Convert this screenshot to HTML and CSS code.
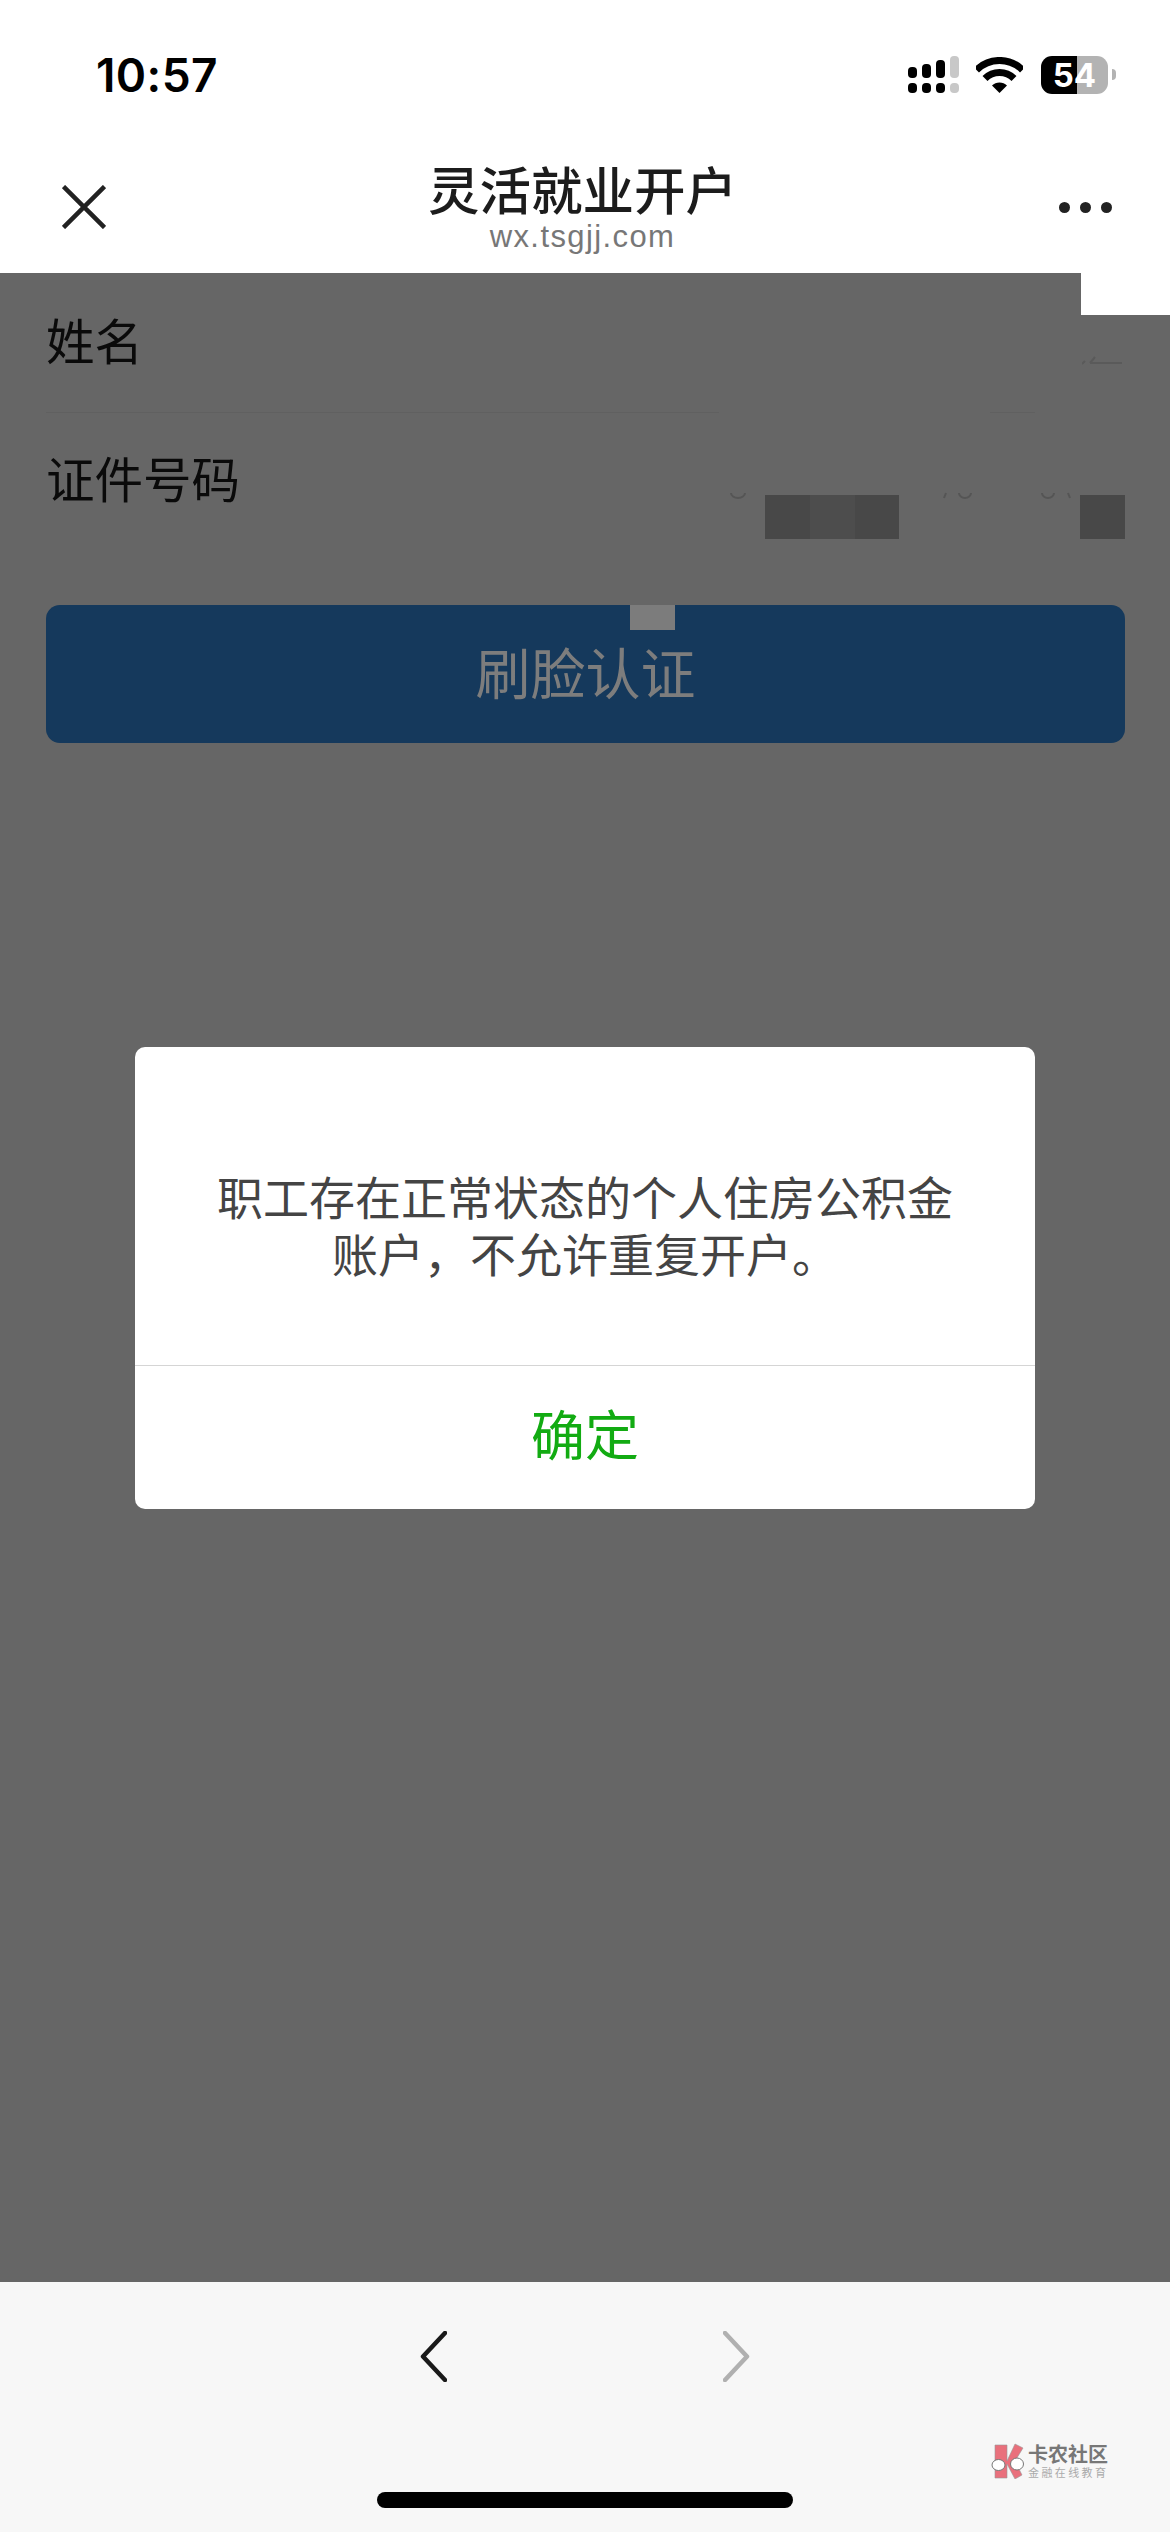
FILE: index.html
```html
<!DOCTYPE html>
<html lang="zh-CN">
<head>
<meta charset="utf-8">
<title>灵活就业开户</title>
<link rel="stylesheet" href="styles.css">
</head>
<body>
<div class="page">
  <header class="status">
    <span class="time">10:57</span>
    <div class="status-icons">
      <svg class="signal" width="51" height="37" viewBox="0 0 51 37">
        <g fill="#000">
          <rect x="0" y="11" width="9" height="11" rx="4"/><rect x="0" y="27" width="9" height="10" rx="4"/>
          <rect x="14" y="8" width="9" height="14" rx="4"/><rect x="14" y="27" width="9" height="10" rx="4"/>
          <rect x="28" y="4" width="9" height="18" rx="4"/><rect x="28" y="27" width="9" height="10" rx="4"/>
        </g>
        <g fill="#c8c8c8">
          <rect x="42" y="0" width="9" height="22" rx="4"/><rect x="42" y="27" width="9" height="10" rx="4"/>
        </g>
      </svg>
      <svg class="wifi" width="47" height="36" viewBox="0 0 47 36">
        <path d="M0.5 13 A32.5 32.5 0 0 1 46.5 13" fill="none" stroke="#000" stroke-width="7"/>
        <path d="M9 21.5 A20.5 20.5 0 0 1 38 21.5" fill="none" stroke="#000" stroke-width="7"/>
        <path d="M23.5 36 L16 28.5 A10.6 10.6 0 0 1 31 28.5 Z" fill="#000"/>
      </svg>
      <div class="battery-wrap">
        <div class="battery">54</div>
        <span class="battery-nub"></span>
      </div>
    </div>
  </header>

  <nav class="nav">
    <svg class="close" width="44" height="44" viewBox="0 0 44 44">
      <path d="M1.5 1.5 L42.5 42.5 M42.5 1.5 L1.5 42.5" stroke="#222" stroke-width="4.5" fill="none"/>
    </svg>
    <div class="nav-title">
      <div class="title">灵活就业开户</div>
      <div class="domain">wx.tsgjj.com</div>
    </div>
    <svg class="more" width="53" height="11" viewBox="0 0 53 11">
      <circle cx="5.5" cy="5.5" r="5.5" fill="#222"/>
      <circle cx="26.5" cy="5.5" r="5.5" fill="#222"/>
      <circle cx="47.5" cy="5.5" r="5.5" fill="#222"/>
    </svg>
  </nav>

  <main class="content">
    <section class="form">
      <div class="row row-name">
        <span class="label">姓名</span>
        <svg class="name-value" width="40" height="10" viewBox="0 0 40 10">
          <path d="M0 8 L3 5 M8 7 L40 7 M8 7 L13 1" stroke="#5a5a5a" stroke-width="2" fill="none"/>
        </svg>
      </div>
      <div class="divider">
        <span class="divider-a"></span>
        <span class="divider-b"></span>
      </div>
      <div class="row row-id">
        <span class="label">证件号码</span>
        <svg class="id-value" width="406" height="48" viewBox="0 0 406 48">
          <rect x="46" y="4" width="45" height="44" fill="#484848"/>
          <rect x="91" y="4" width="45" height="44" fill="#4d4d4d"/>
          <rect x="136" y="4" width="44" height="44" fill="#484848"/>
          <rect x="361" y="4" width="45" height="44" fill="#484848"/>
          <path d="M12 2 a7 5 0 0 0 14 0 M227 2 l-2 5 M240 2 a6 5 0 0 0 12 0 M323 2 a6 5 0 0 0 12 0 M349 2 l2 5" stroke="#555" stroke-width="2" fill="none"/>
        </svg>
      </div>
      <div class="submit">
        <span class="submit-text">刷脸认证</span>
        <span class="submit-notch"></span>
      </div>
    </section>
    <span class="corner-patch"></span>

    <div class="modal">
      <div class="dialog">
        <p class="dialog-text">职工存在正常状态的个人住房公积金账户，不允许重复开户。</p>
        <div class="dialog-action">确定</div>
      </div>
    </div>
  </main>

  <footer class="toolbar">
    <div class="toolbar-arrows">
      <svg width="27" height="51" viewBox="0 0 27 51">
        <path d="M25 2 L3 25.5 L25 49" stroke="#1a1a1a" stroke-width="4.5" fill="none" stroke-linecap="round" stroke-linejoin="round"/>
      </svg>
      <svg width="27" height="51" viewBox="0 0 27 51">
        <path d="M2 2 L24 25.5 L2 49" stroke="#b0b0b0" stroke-width="4.5" fill="none" stroke-linecap="round" stroke-linejoin="round"/>
      </svg>
    </div>
    <div class="home-indicator"></div>
    <div class="watermark">
      <svg width="34" height="36" viewBox="0 0 34 36">
        <path d="M5 2 L17 2 L17 18 L25 1 L33 5 L25 18 L32 32 L25 36 L17 21 L17 35 L5 35 Z" fill="#e9707c" stroke="#999" stroke-width="0.6"/>
        <ellipse cx="8.5" cy="22" rx="6.5" ry="5.5" fill="#fff" stroke="#777" stroke-width="1"/>
        <ellipse cx="27" cy="21" rx="6.5" ry="6" fill="#fff" stroke="#777" stroke-width="1"/>
      </svg>
      <div class="watermark-text">
        <span class="wm-name">卡农社区</span>
        <span class="wm-sub">金融在线教育</span>
      </div>
    </div>
  </footer>
</div>
</body>
</html>
```
FILE: styles.css
```css
* { box-sizing: border-box; }
html, body { margin: 0; padding: 0; }
body {
  font-family: "Noto Sans CJK SC", "Liberation Sans", sans-serif;
  background: #fff;
}
.page {
  width: 1170px;
  height: 2532px;
  display: flex;
  flex-direction: column;
  overflow: hidden;
}

/* status bar */
.status {
  height: 149px;
  flex: none;
  display: flex;
  align-items: center;
  justify-content: space-between;
  padding: 0 54px 0 96px;
}
.time {
  font-family: Inter, "Liberation Sans", sans-serif;
  font-weight: 600;
  font-size: 46px;
  line-height: 50px;
  letter-spacing: 0.4px;
  color: #000;
}
.status-icons { display: flex; align-items: center; }
.signal { display: block; margin-right: 17px; }
.wifi { display: block; margin-right: 18px; }
.battery-wrap { display: flex; align-items: center; gap: 4px; }
.battery {
  width: 67px;
  height: 38px;
  border-radius: 11px;
  background: linear-gradient(90deg, #000 36px, #b3b3b3 36px);
  color: #fff;
  font-family: Inter, "Liberation Sans", sans-serif;
  font-weight: 700;
  font-size: 33px;
  line-height: 38px;
  text-align: center;
}
.battery-nub {
  width: 4px;
  height: 11px;
  background: #b3b3b3;
  border-radius: 0 4px 4px 0;
}

/* nav */
.nav {
  height: 124px;
  flex: none;
  display: flex;
  align-items: center;
  justify-content: space-between;
  padding: 0 58px 8px 62px;
}
.close, .more { display: block; }
.nav-title { text-align: center; }
.title {
  font-size: 51.5px;
  line-height: 58px;
  font-weight: 500;
  color: #1c1c1c;
}
.domain {
  margin-top: 2px;
  font-family: "Liberation Sans", sans-serif;
  font-size: 31px;
  line-height: 36px;
  letter-spacing: 1.4px;
  color: #777;
}

/* page behind the modal */
.content {
  flex: 1;
  position: relative;
  background: #666;
  overflow: hidden;
}
.form { padding: 36px 45px 0 46px; }
.row {
  display: flex;
  justify-content: space-between;
}
.label {
  font-size: 48.5px;
  line-height: 60px;
  color: #0a0a0a;
}
.row-name { height: 60px; margin-bottom: 43px; }
.name-value { display: block; margin: 47px 3px 0 0; }
.divider {
  display: flex;
  height: 1px;
  gap: 271px;
}
.divider-a { width: 673px; background: #606060; }
.divider-b { width: 45px; background: #606060; }
.row-id { margin-top: 34px; height: 158px; }
.id-value { display: block; margin-top: 44px; }
.submit {
  position: relative;
  height: 138px;
  border-radius: 14px;
  background: #15395c;
  display: flex;
  align-items: center;
  justify-content: center;
  padding-bottom: 8px;
}
.submit-text {
  font-size: 55px;
  line-height: 66px;
  color: #7d7d7d;
}
.submit-notch {
  position: absolute;
  left: 584px;
  top: 0;
  width: 45px;
  height: 25px;
  background: #7c7c7c;
}
.corner-patch {
  position: absolute;
  right: 0;
  top: 0;
  width: 89px;
  height: 42px;
  background: #fff;
}

/* modal */
.modal {
  position: absolute;
  inset: 0;
  padding: 774px 135px 0;
}
.dialog {
  width: 900px;
  height: 462px;
  background: #fff;
  border-radius: 10px;
  display: flex;
  flex-direction: column;
}
.dialog-text {
  margin: 0;
  padding: 120px 80px 0;
  border-bottom: 1px solid #d5d5d5;
  box-sizing: content-box;
  height: 198px;
  font-size: 46px;
  line-height: 57px;
  text-align: center;
  color: #444;
}
.dialog-action {
  flex: 1;
  display: flex;
  align-items: center;
  justify-content: center;
  padding-bottom: 10px;
  font-size: 54px;
  color: #12ab12;
}

/* bottom toolbar */
.toolbar {
  position: relative;
  height: 250px;
  flex: none;
  background: #f7f7f7;
  padding-top: 49px;
}
.toolbar-arrows {
  display: flex;
  justify-content: center;
  gap: 276px;
}
.toolbar-arrows svg { display: block; }
.home-indicator {
  width: 416px;
  height: 16px;
  margin: 110px auto 0;
  border-radius: 8px;
  background: #000;
}
.watermark {
  position: absolute;
  left: 990px;
  top: 161px;
  display: flex;
  align-items: center;
  gap: 4px;
}
.watermark svg { display: block; }
.watermark-text { display: flex; flex-direction: column; }
.wm-name {
  font-size: 20px;
  line-height: 22px;
  font-weight: 700;
  color: #777;
}
.wm-sub {
  font-size: 11px;
  line-height: 14px;
  letter-spacing: 2.4px;
  color: #aaa;
}
```
